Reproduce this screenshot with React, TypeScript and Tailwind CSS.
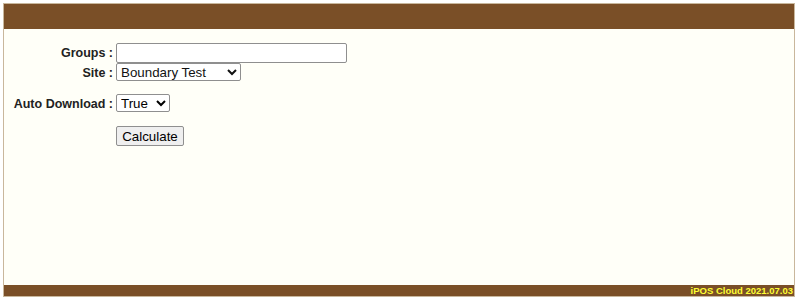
// Calculation form page with header and footer bars

export default function App() {
  return (
    <div className="h-[304px] w-[800px] bg-white pl-[3px] pr-[5px] pt-[3px] font-['Liberation_Sans',Arial,sans-serif]">
      <div className="flex h-[294px] flex-col border border-[#c9b79c] bg-[#fffff8]">
        {/* Header */}
        <div className="h-[25px] bg-[#7a4f27]" />

        {/* Form */}
        <div className="flex-1 pt-[14px]">
          <div className="flex flex-col text-[12.5px] font-bold text-[#222]">
            <FormRow label="Groups :">
              <input
                type="text"
                className="h-[20px] w-[231px] rounded-[2px] border border-[#8f8f8f] bg-white px-1 text-[13px]"
              />
            </FormRow>
            <FormRow label="Site :">
              <select
                defaultValue="Boundary Test"
                className="h-[18px] w-[125px] rounded-[2px] border border-[#8f8f8f] bg-white text-[13.33px] font-normal text-[#111]"
              >
                <option>Boundary Test</option>
              </select>
            </FormRow>
            <div className="h-[11px]" />
            <FormRow label="Auto Download :">
              <select
                defaultValue="True"
                className="h-[18px] w-[54px] rounded-[2px] border border-[#8f8f8f] bg-white text-[13.33px] font-normal text-black"
              >
                <option>True</option>
                <option>False</option>
              </select>
            </FormRow>
            <div className="h-[12px]" />
            <FormRow label="">
              <button className="h-[20px] w-[68px] rounded-[2px] border border-[#8f8f8f] bg-[#efefef] text-[13.33px] font-normal text-black">
                Calculate
              </button>
            </FormRow>
          </div>
        </div>

        {/* Footer */}
        <div className="flex h-[11px] items-center justify-end bg-[#7a4f27] pr-[1px]">
          <span className="text-[9.5px] font-bold leading-none text-[#ffff33]">iPOS Cloud 2021.07.03</span>
        </div>
      </div>
    </div>
  );
}

function FormRow({ label, children }: { label: string; children: React.ReactNode }) {
  return (
    <div className="flex items-center">
      <div className="w-[111px] whitespace-nowrap pr-[2px] text-right leading-none">{label}</div>
      <div className="pl-[1px]">{children}</div>
    </div>
  );
}
